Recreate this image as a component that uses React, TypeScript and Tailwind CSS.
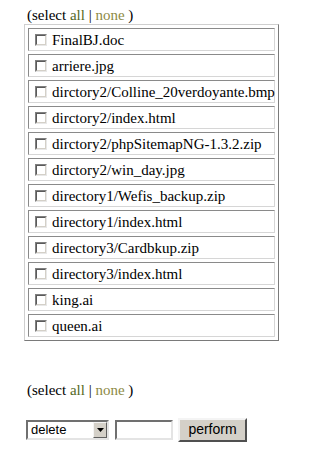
const FILES = [
  'FinalBJ.doc',
  'arriere.jpg',
  'dirctory2/Colline_20verdoyante.bmp',
  'dirctory2/index.html',
  'dirctory2/phpSitemapNG-1.3.2.zip',
  'dirctory2/win_day.jpg',
  'directory1/Wefis_backup.zip',
  'directory1/index.html',
  'directory3/Cardbkup.zip',
  'directory3/index.html',
  'king.ai',
  'queen.ai',
];

function SelectLinks() {
  return (
    <div className="h-[19px] leading-[19px] pl-[3px]">
      (select <a className="text-[#55691f]">all</a> | <a className="text-[#8d8a45]">none</a> )
    </div>
  );
}

function Checkbox() {
  return (
    <span className="inline-block w-[12px] h-[12px] border border-t-[#808080] border-l-[#808080] border-b-[#e8e8e8] border-r-[#e8e8e8] bg-white shrink-0">
      <span className="block w-full h-full border border-t-[#5a5a5a] border-l-[#5a5a5a] border-b-[#d4d0c8] border-r-[#d4d0c8]" />
    </span>
  );
}

export default function App() {
  return (
    <div className="w-[317px] h-[463px] bg-white text-black text-[15px] pl-[24px] pt-[6px] font-['Liberation_Serif','Times_New_Roman',serif]">
      <SelectLinks />

      <div className="mt-[-1px] w-[255px] flex flex-col gap-[3px] p-[3px] border border-t-[#cfcfcf] border-l-[#cfcfcf] border-r-[#7a7a7a] border-b-[#7a7a7a]">
        {FILES.map((f) => (
          <div
            key={f}
            className="h-[23px] flex items-center border border-t-[#8a8a8a] border-l-[#8a8a8a] border-b-[#d6d6d6] border-r-[#d6d6d6] pl-[6px] gap-[5px] whitespace-nowrap"
          >
            <Checkbox />
            <span className="leading-[18px]">{f}</span>
          </div>
        ))}
      </div>

      <div className="mt-[40px]">
        <SelectLinks />
      </div>

      <div className="mt-[18px] flex items-center pl-[2px] gap-[6px] font-['Liberation_Sans',Arial,sans-serif]">
        <div className="w-[83px] h-[20px] flex items-center border-2 border-t-[#707070] border-l-[#707070] border-b-[#e4e4e4] border-r-[#e4e4e4] bg-white">
          <span className="flex-1 pl-[3px] text-[13px] leading-[16px]">delete</span>
          <span className="w-[14px] h-[16px] flex items-center justify-center bg-[#d4d0c8] border border-t-[#f4f4f4] border-l-[#f4f4f4] border-b-[#606060] border-r-[#606060]">
            <svg width="7" height="4" viewBox="0 0 7 4">
              <path d="M0 0h7L3.5 4z" fill="#000" />
            </svg>
          </span>
        </div>
        <div className="w-[58px] h-[20px] border-2 border-t-[#707070] border-l-[#707070] border-b-[#e4e4e4] border-r-[#e4e4e4] bg-white" />
        <button className="ml-[-1px] w-[69px] h-[24px] bg-[#d4d0c8] text-[14px] leading-[18px] border-2 border-t-[#f4f4f4] border-l-[#f4f4f4] border-b-[#505050] border-r-[#505050] pb-[2px]">
          perform
        </button>
      </div>
    </div>
  );
}
